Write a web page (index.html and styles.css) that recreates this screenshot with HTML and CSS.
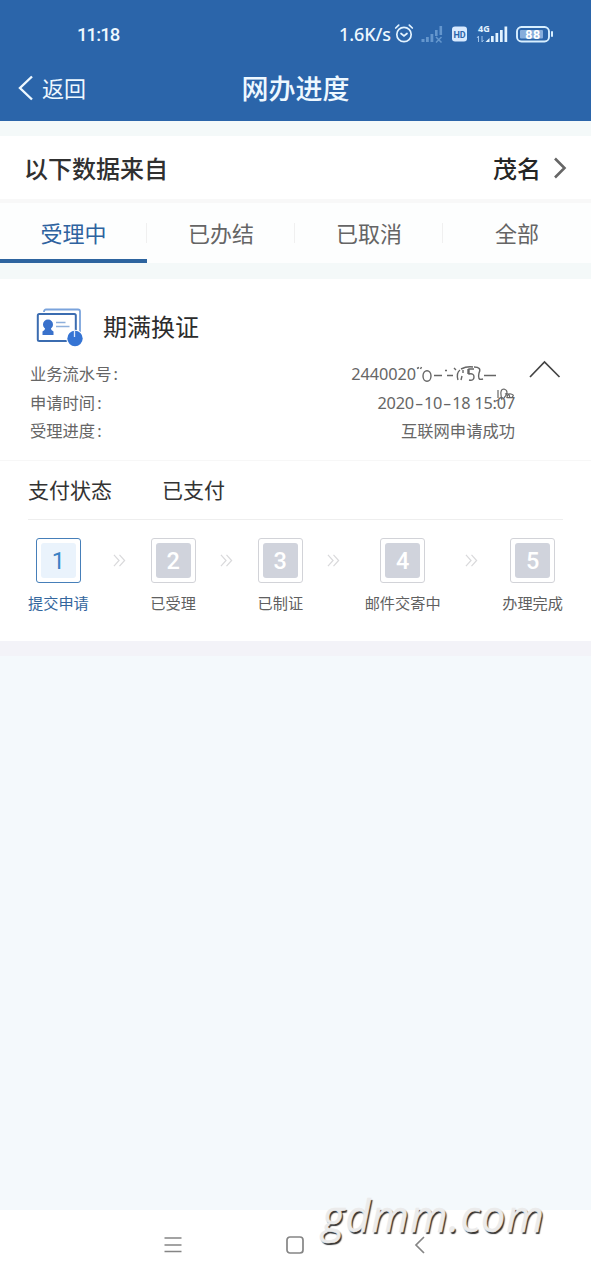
FILE: index.html
```
<!DOCTYPE html>
<html lang="zh-CN">
<head>
<meta charset="utf-8">
<title>网办进度</title>
<link rel="stylesheet" href="styles.css">
</head>
<body>
<div class="screen">
  <header class="header">
    <div class="status">
      <span class="clock">11:18</span>
      <div class="status-right">
        <span class="speed">1.6K/s</span>
        <svg class="status-icons" width="164" height="24" viewBox="0 0 164 24" fill="none">
          <g stroke="#e3f3ff" stroke-width="1.7" stroke-linecap="round">
            <circle cx="13" cy="12.5" r="7.2"/>
            <path d="M10 11.500l3 2.500 3-2.500M4.700 6l3-2.800M21.300 6l-3-2.800"/>
          </g>
          <g fill="#6496cd">
            <rect x="30.500" y="17" width="3" height="3"/><rect x="35" y="15" width="2.800" height="5"/><rect x="39.500" y="12" width="2.800" height="8"/><rect x="44" y="8" width="2.600" height="6"/><rect x="48.500" y="4" width="2.600" height="9"/>
            <path d="M45 15l5.500 5.500M50.500 15l-5.500 5.500" stroke="#6496cd" stroke-width="1.500"/>
          </g>
          <rect x="61" y="4.500" width="15" height="15" rx="3" fill="#d8eaff"/>
          <text x="68.500" y="15.700" class="hd" text-anchor="middle">HD</text>
          <text x="87" y="9.500" class="net">4G</text>
          <path d="M87.500 14v6M86 16l1.500-2M91 14v6M91 20l1.500-2" stroke="#9fc3ea"/>
          <g fill="#e3f3ff">
            <path d="M94.500 20l4-4v4z"/><rect x="100" y="14" width="2.700" height="6"/><rect x="104.500" y="11" width="2.700" height="9"/><rect x="109" y="8" width="2.700" height="12"/><rect x="113.500" y="4.500" width="2.700" height="15.500"/>
          </g>
          <rect x="126" y="5" width="32" height="14.500" rx="4.500" stroke="#d8efff" stroke-width="1.900"/>
          <rect x="129" y="8" width="23" height="8.500" rx="1" fill="#86addb"/>
          <path d="M161 10v4" stroke="#d8efff" stroke-width="2" stroke-linecap="round"/>
          <text x="142" y="16.500" class="battery" text-anchor="middle">88</text>
        </svg>
      </div>
    </div>
    <div class="titlebar">
      <div class="back">
        <svg width="16" height="26" viewBox="0 0 16 26" fill="none" stroke="#eef8ff" stroke-width="2.400"><path d="M14 1.500L2 13l12 11.500"/></svg>
        <span>返回</span>
      </div>
      <h1 class="title">网办进度</h1>
    </div>
  </header>

  <section class="source">
    <span>以下数据来自</span>
    <span class="city">茂名
      <svg width="14" height="22" viewBox="0 0 14 22" fill="none" stroke="#666" stroke-width="2.600"><path d="M2 1.500L11.500 11 2 20.500"/></svg>
    </span>
  </section>

  <nav class="tabs">
    <div class="tab active">受理中</div>
    <div class="tab">已办结</div>
    <div class="tab">已取消</div>
    <div class="tab">全部</div>
  </nav>

  <main class="card">
    <div class="card-head">
      <svg width="48" height="40" viewBox="0 0 48 40" fill="none">
        <path d="M8 5V4.500a2 2 0 0 1 2-2h32a2 2 0 0 1 2 2V25" stroke="#7aa3dc" stroke-width="1.800"/>
        <rect x="1.800" y="7" width="38" height="27" rx="1.500" fill="#fff" stroke="#3b6cb0" stroke-width="2"/>
        <circle cx="12" cy="17.500" r="5" fill="#3971cb"/>
        <path d="M9.500 20h5q.2 3 3 4.500v3.500h-11v-3.500q2.800-1.500 3-4.500z" fill="#3971cb"/>
        <path d="M20 15.500h9.500M20 19.500h13.500" stroke="#8eb0dc" stroke-width="1.300"/>
        <circle cx="39" cy="31.500" r="8.800" fill="#fff"/><circle cx="39" cy="31.500" r="7.700" fill="#3574d4"/>
        <path d="M38.500 23v7" stroke="#dce9fa" stroke-width="1.300"/>
      </svg>
      <h2 class="card-title">期满换证</h2>
    </div>
    <div class="info">
      <dl class="rows">
        <div class="row"><dt>业务流水号<span class="colon">:</span></dt>
          <dd class="serial">2440020<svg width="80" height="22" viewBox="0 0 80 22" fill="none" stroke="#666" stroke-width="1.400">
            <path d="M1 5.500l2-1M4.500 6l1-2"/><ellipse cx="11" cy="13" rx="4" ry="5.300"/>
            <path d="M18 12.500h8M31 12.500h6M29 7.500h2M38 5l2 2"/>
            <path d="M42 17q-2-7 2-10M47 7v3M46 13l-1 4M45 6q6-3 12-2M52 6v5M58 6h-5v5q5-1 5 3t-5 3M58 4q8 0 5 6-2 8 4 6M68 12.500h12"/>
          </svg></dd></div>
        <div class="row"><dt>申请时间<span class="colon">:</span></dt>
          <dd class="date">2020<span class="dash">-</span>10<span class="dash">-</span>18 15:07<svg class="scribble" width="24" height="20" viewBox="0 0 24 20" fill="none" stroke="#666" stroke-width="1.200"><path d="M4 2v8M2 13l2-1M8 12Q5 1 10 1q6 2 0 9M13 10q0-5 4-4 4 1 1 3M11 6q4-2 5 4"/></svg></dd></div>
        <div class="row"><dt>受理进度<span class="colon">:</span></dt><dd>互联网申请成功</dd></div>
      </dl>
      <svg class="collapse" width="32" height="19" viewBox="0 0 32 19" fill="none" stroke="#444" stroke-width="1.700"><path d="M1 17L15.500 2 30.500 17"/></svg>
    </div>
    <div class="pay"><span>支付状态</span><span>已支付</span></div>
    <div class="steps">
      <div class="step current"><div class="box"><span>1</span></div><p>提交申请</p></div>
      <svg class="arrow" viewBox="0 0 14 14"><path d="M1 1l5.500 6L1 13M7 1l5.500 6L7 13"/></svg>
      <div class="step"><div class="box"><span>2</span></div><p>已受理</p></div>
      <svg class="arrow" viewBox="0 0 14 14"><path d="M1 1l5.500 6L1 13M7 1l5.500 6L7 13"/></svg>
      <div class="step"><div class="box"><span>3</span></div><p>已制证</p></div>
      <svg class="arrow" viewBox="0 0 14 14"><path d="M1 1l5.500 6L1 13M7 1l5.500 6L7 13"/></svg>
      <div class="step"><div class="box"><span>4</span></div><p>邮件交寄中</p></div>
      <svg class="arrow" viewBox="0 0 14 14"><path d="M1 1l5.500 6L1 13M7 1l5.500 6L7 13"/></svg>
      <div class="step"><div class="box"><span>5</span></div><p>办理完成</p></div>
    </div>
  </main>
  <div class="band"></div>
  <div class="empty"></div>

  <footer class="sysnav">
    <svg width="18" height="18" viewBox="0 0 18 18" stroke="#858585" stroke-width="1.600"><path d="M.5 2h17M.5 9h17M.5 15.500h17"/></svg>
    <svg width="18" height="18" viewBox="0 0 18 18" fill="none" stroke="#858585" stroke-width="1.700"><rect x="1" y="1" width="16" height="16" rx="3"/></svg>
    <svg width="12" height="18" viewBox="0 0 12 18" fill="none" stroke="#858585" stroke-width="1.700"><path d="M10 1L2 9l8 8"/></svg>
  </footer>
  <div class="watermark">gdmm.com</div>
</div>
</body>
</html>
```

FILE: styles.css
```
* { box-sizing: border-box; }
body, h1, h2, p, dl, dd { margin: 0; }
body { font-family: "Noto Sans", "Noto Sans CJK SC", sans-serif; background: #fff; }
svg { display: block; flex: none; }

.screen { position: relative; display: flex; flex-direction: column; width: 591px; height: 1280px; overflow: hidden; background: linear-gradient(#f4f9f9 0 279px, #fff 279px); }

.header { height: 121px; background: #2b65aa; color: #eef8ff; }
.status { display: flex; justify-content: space-between; align-items: center; height: 68px; padding: 0 36px 0 77px; }
.clock { font: 500 18.5px/24px Roboto, sans-serif; letter-spacing: -.9px; padding-top: 1px; }
.status-right { display: flex; align-items: center; }
.speed { font: 500 18px/24px "Noto Sans", sans-serif; letter-spacing: -.1px; white-space: nowrap; }
.hd { font: 700 9px Roboto, sans-serif; fill: #2b65aa; }
.net { font: 700 9px "Noto Sans", sans-serif; fill: #e3f3ff; }
.battery { font: 700 12.5px Roboto, sans-serif; fill: #fff; letter-spacing: .5px; }

.titlebar { display: grid; grid-template-columns: 1fr auto 1fr; align-items: center; height: 42px; padding: 0 18px; }
.back { display: flex; align-items: center; gap: 8px; font-size: 22px; line-height: 32px; margin-top: -2px; }
.title { font-size: 27px; font-weight: 500; line-height: 40px; }

.source { display: flex; justify-content: space-between; align-items: center; height: 67px; margin-top: 15px; padding: 0 24px; border-bottom: 4px solid #f8f8f8; background: #fff; font-size: 24px; font-weight: 500; color: #303030; }
.city { display: flex; align-items: center; gap: 12px; color: #252525; }

.tabs { display: grid; grid-template-columns: 147px 148px 148px 148px; height: 60px; background: #fdfefe; }
.tab { display: flex; align-items: center; justify-content: center; padding-top: 2px; border-bottom: 4px solid transparent; font-size: 22px; color: #656565; background: linear-gradient(#f0f0f0, #f0f0f0) right 20px / 1px 20px no-repeat; }
.tab:last-child { background: none; }
.tab.active { color: #2e639f; border-bottom-color: #2d649f; }

.card { height: 362px; margin-top: 16px; background: #fff; }
.card-head { display: flex; align-items: center; gap: 19px; height: 80px; padding: 15px 0 0 36px; }
.card-title { font-size: 24px; font-weight: 400; line-height: 34px; color: #2c2c2c; }
.info { display: flex; align-items: flex-start; height: 102px; padding: 1px 30px 0; border-bottom: 1px solid #f7f7f7; }
.rows { width: 486px; }
.row { display: flex; justify-content: space-between; height: 28.5px; line-height: 28.5px; font-size: 16.3px; color: #666; }
.colon { padding-left: 2px; }
.serial { display: flex; align-items: center; padding-right: 19px; letter-spacing: -.05px; }
.date { position: relative; letter-spacing: -.2px; }
.dash { display: inline-block; width: 10px; text-align: center; transform: scaleX(1.6); }
.scribble { position: absolute; right: -3px; top: -1px; }
.collapse { margin: 0 0 0 14px; }

.pay { display: flex; gap: 50px; height: 59px; margin: 0 28px; border-bottom: 1px solid #eee; font-size: 21px; line-height: 58px; color: #333; }
.steps { display: flex; justify-content: space-between; padding: 18px 28px 0; }
.step { display: flex; flex-direction: column; align-items: center; font-size: 15.2px; color: #606060; }
.step p { line-height: 24px; margin-top: 8px; white-space: nowrap; }
.box { width: 45px; height: 45px; padding: 4px; border: 1px solid #d2d3d8; border-radius: 3px; }
.box span { display: block; height: 35px; border-radius: 3px; background: #d0d3dc; color: #fff; font: 500 23.5px/36px Roboto, sans-serif; text-align: center; }
.current { color: #33669d; }
.current .box { border: 1.500px solid #467fb9; }
.current .box span { background: #eaf3fc; color: #3b82c4; font-weight: 400; }
.arrow { width: 13px; height: 13px; margin-top: 16px; fill: none; stroke: #d9d9db; stroke-width: 1.3; }

.band { height: 15px; background: #f3f3f8; }
.empty { height: 554px; background: #f4f9fc; }
.sysnav { display: flex; align-items: center; height: 70px; padding-left: 164px; background: #fff; gap: 104px; }
.sysnav svg:last-child { margin-left: 6px; }
.watermark { position: absolute; left: 322px; top: 1186px; font: italic 400 43px/60px "Open Sans", sans-serif; letter-spacing: 1.1px; color: #ebebeb; -webkit-text-stroke: .5px #ebebeb; text-shadow: 1.5px 1.5px 1px #333; }
```
